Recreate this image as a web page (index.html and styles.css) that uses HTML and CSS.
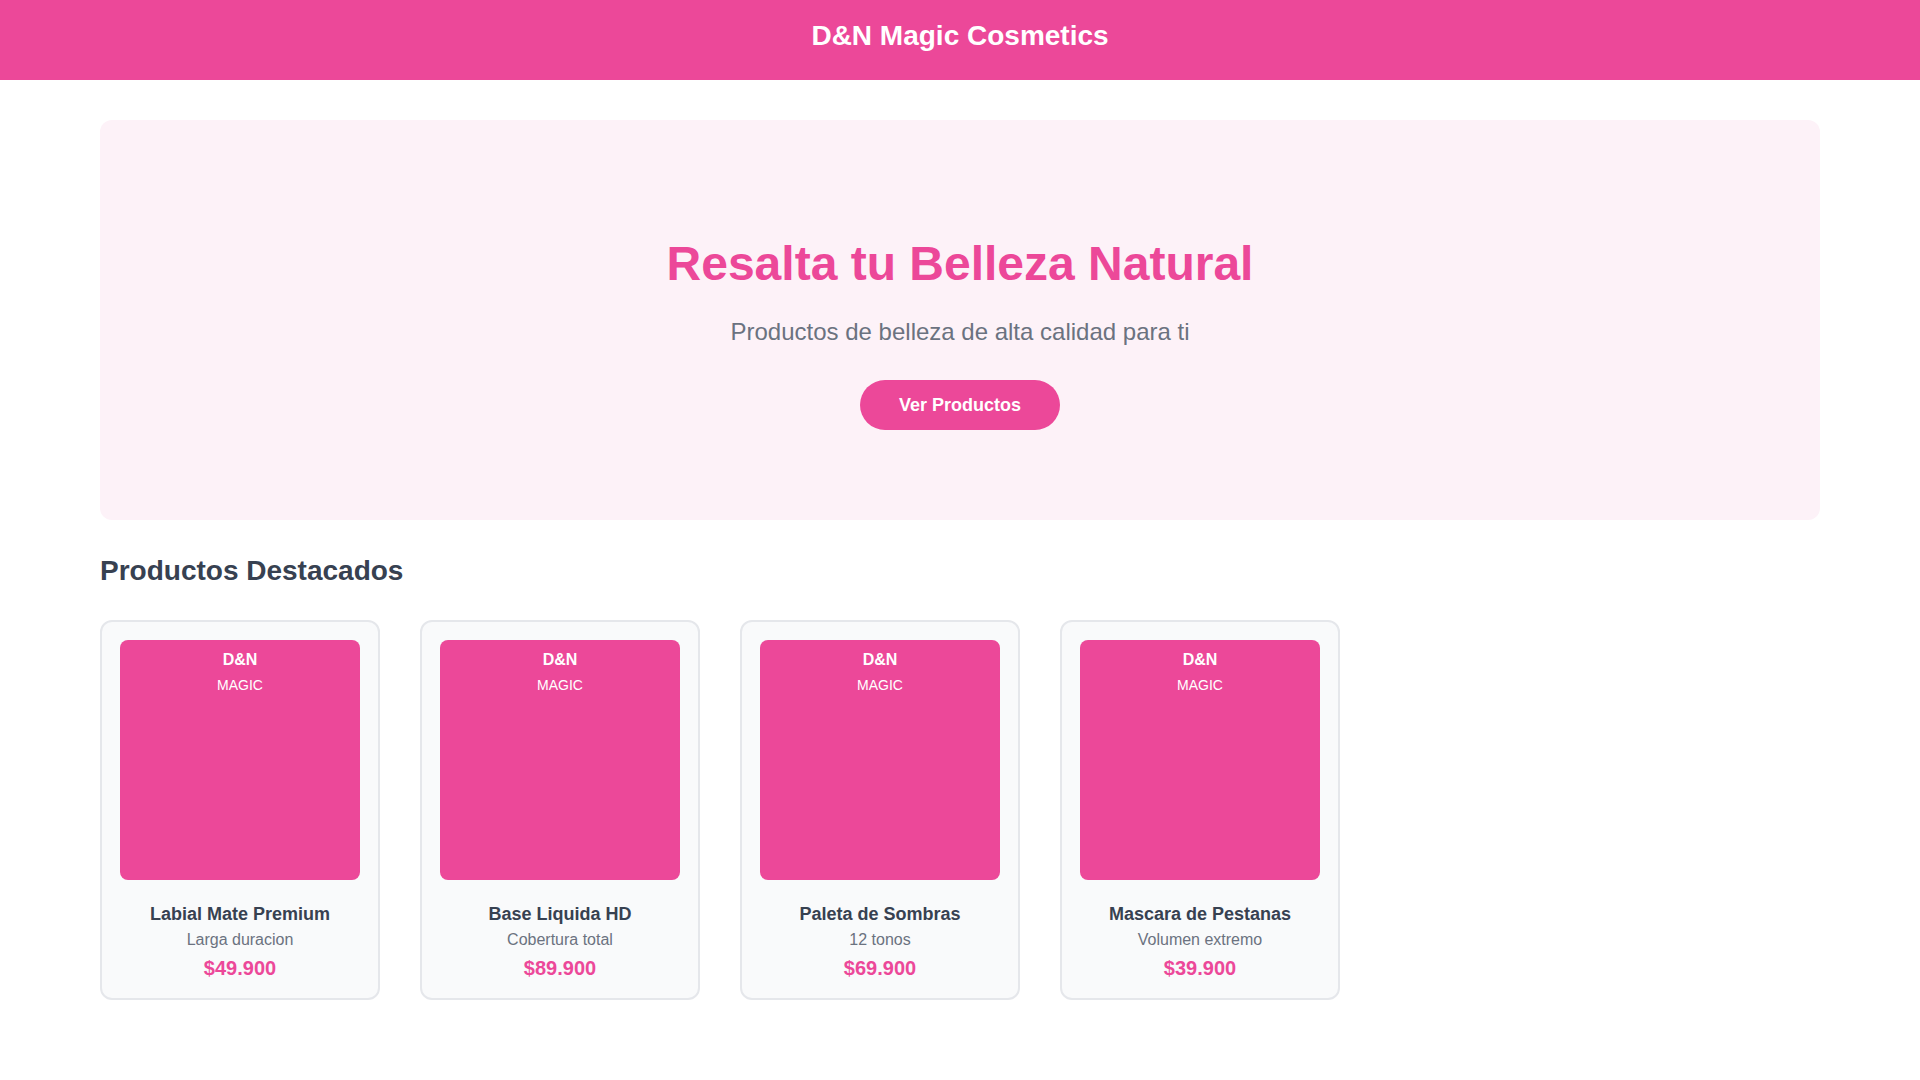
FILE: index.html
```html
<!DOCTYPE html>
<html lang="es">
<head>
<meta charset="utf-8">
<title>D&amp;N Magic Cosmetics</title>
<link rel="stylesheet" href="styles.css">
</head>
<body>
<header class="topbar">
  <h1 class="brand">D&amp;N Magic Cosmetics</h1>
</header>
<main class="page">
  <section class="hero">
    <h2 class="hero-title">Resalta tu Belleza Natural</h2>
    <p class="hero-sub">Productos de belleza de alta calidad para ti</p>
    <button class="hero-btn">Ver Productos</button>
  </section>
  <h2 class="section-title">Productos Destacados</h2>
  <div class="products">
    <div class="card">
      <div class="thumb"><span class="thumb-brand">D&amp;N</span><span class="thumb-sub">MAGIC</span></div>
      <h3 class="card-name">Labial Mate Premium</h3>
      <p class="card-desc">Larga duracion</p>
      <p class="card-price">$49.900</p>
    </div>
    <div class="card">
      <div class="thumb"><span class="thumb-brand">D&amp;N</span><span class="thumb-sub">MAGIC</span></div>
      <h3 class="card-name">Base Liquida HD</h3>
      <p class="card-desc">Cobertura total</p>
      <p class="card-price">$89.900</p>
    </div>
    <div class="card">
      <div class="thumb"><span class="thumb-brand">D&amp;N</span><span class="thumb-sub">MAGIC</span></div>
      <h3 class="card-name">Paleta de Sombras</h3>
      <p class="card-desc">12 tonos</p>
      <p class="card-price">$69.900</p>
    </div>
    <div class="card">
      <div class="thumb"><span class="thumb-brand">D&amp;N</span><span class="thumb-sub">MAGIC</span></div>
      <h3 class="card-name">Mascara de Pestanas</h3>
      <p class="card-desc">Volumen extremo</p>
      <p class="card-price">$39.900</p>
    </div>
  </div>
</main>
</body>
</html>
```

FILE: styles.css
```css
* { box-sizing: border-box; }
body {
  margin: 0;
  font-family: "Liberation Sans", Arial, sans-serif;
  background: #ffffff;
  color: #374151;
}
.topbar {
  height: 80px;
  background: #ec4899;
  padding-top: 20px;
  text-align: center;
}
.brand {
  margin: 0;
  color: #ffffff;
  font-size: 28px;
  line-height: 32px;
  font-weight: 700;
}
.page {
  padding: 40px 100px;
}
.hero {
  background: #fdf2f8;
  border-radius: 12px;
  height: 400px;
  padding-top: 116px;
  text-align: center;
}
.hero-title {
  margin: 0;
  color: #ec4899;
  font-size: 48px;
  line-height: 56px;
  font-weight: 700;
}
.hero-sub {
  margin: 26px 0 0;
  color: #6b7280;
  font-size: 24px;
  line-height: 28px;
}
.hero-btn {
  margin-top: 34px;
  height: 50px;
  width: 200px;
  border: none;
  border-radius: 25px;
  background: #ec4899;
  color: #ffffff;
  font-family: inherit;
  font-size: 18px;
  font-weight: 700;
}
.section-title {
  margin: 34px 0 32px;
  font-size: 28px;
  line-height: 34px;
  font-weight: 700;
  color: #374151;
}
.products {
  display: flex;
  flex-wrap: wrap;
  gap: 40px;
}
.card {
  width: 280px;
  height: 380px;
  background: #f9fafb;
  border: 2px solid #e5e7eb;
  border-radius: 12px;
  padding: 18px;
  text-align: center;
}
.thumb {
  height: 240px;
  background: #ec4899;
  border-radius: 8px;
  padding-top: 10px;
  display: flex;
  flex-direction: column;
  align-items: center;
  color: #ffffff;
}
.thumb-brand {
  font-size: 16px;
  line-height: 20px;
  font-weight: 700;
}
.thumb-sub {
  margin-top: 5px;
  font-size: 14px;
  line-height: 20px;
}
.card-name {
  margin: 23px 0 0;
  font-size: 18px;
  line-height: 22px;
  font-weight: 700;
  color: #374151;
}
.card-desc {
  margin: 5px 0 0;
  font-size: 16px;
  line-height: 20px;
  color: #6b7280;
}
.card-price {
  margin: 6px 0 0;
  font-size: 20px;
  line-height: 24px;
  font-weight: 700;
  color: #ec4899;
}
```
